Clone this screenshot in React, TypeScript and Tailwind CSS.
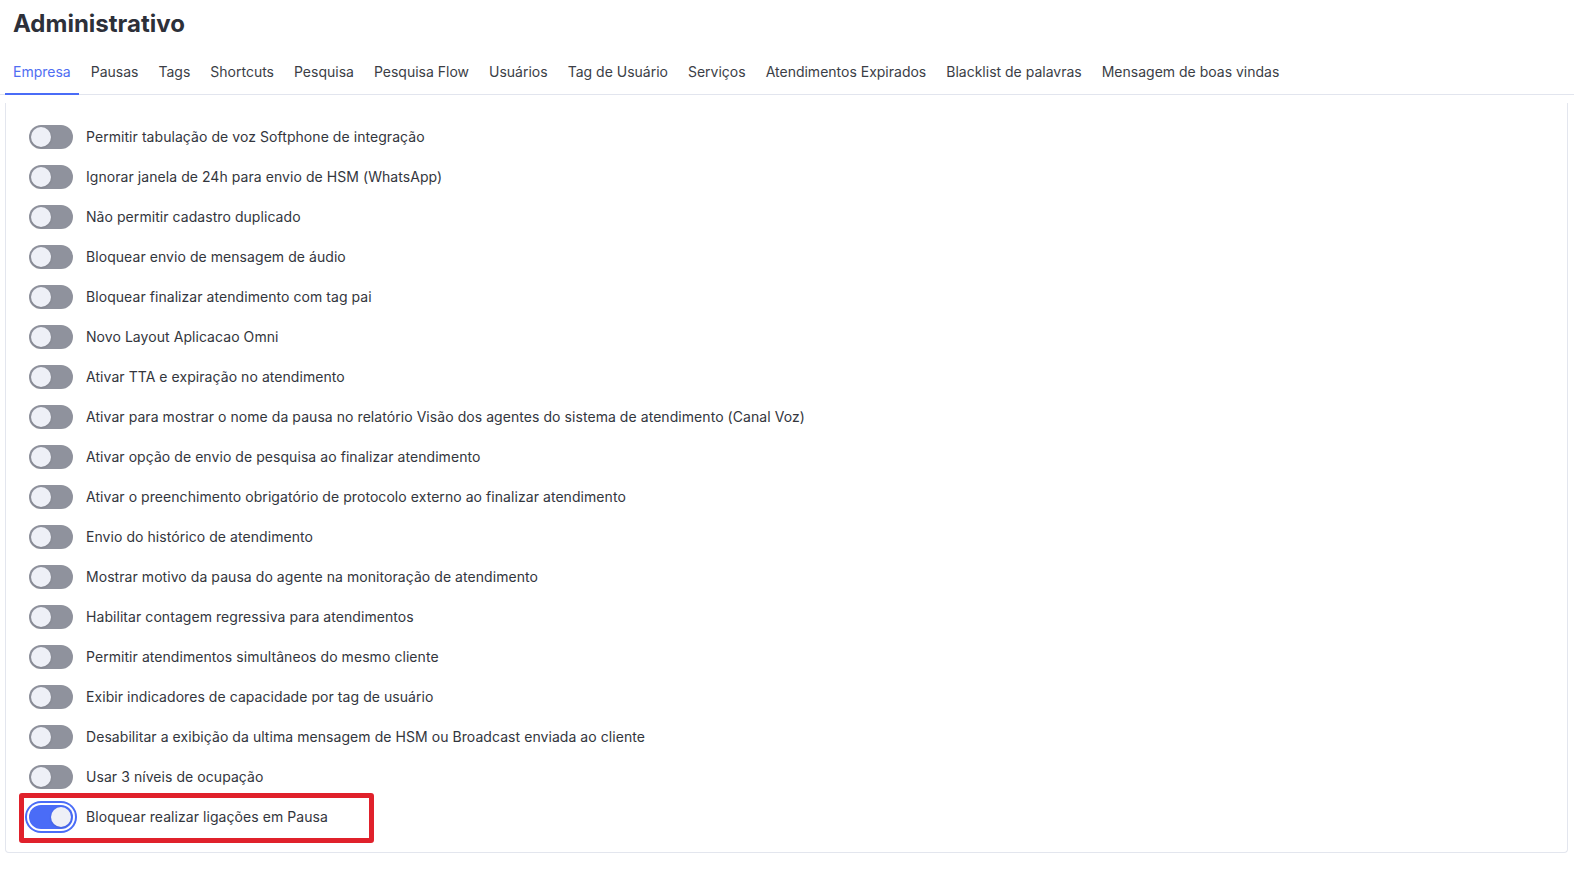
import React, { useState } from "react";

const tabs = [
  "Empresa",
  "Pausas",
  "Tags",
  "Shortcuts",
  "Pesquisa",
  "Pesquisa Flow",
  "Usuários",
  "Tag de Usuário",
  "Serviços",
  "Atendimentos Expirados",
  "Blacklist de palavras",
  "Mensagem de boas vindas",
];

const settings: { label: string; on: boolean }[] = [
  { label: "Permitir tabulação de voz Softphone de integração", on: false },
  { label: "Ignorar janela de 24h para envio de HSM (WhatsApp)", on: false },
  { label: "Não permitir cadastro duplicado", on: false },
  { label: "Bloquear envio de mensagem de áudio", on: false },
  { label: "Bloquear finalizar atendimento com tag pai", on: false },
  { label: "Novo Layout Aplicacao Omni", on: false },
  { label: "Ativar TTA e expiração no atendimento", on: false },
  {
    label:
      "Ativar para mostrar o nome da pausa no relatório Visão dos agentes do sistema de atendimento (Canal Voz)",
    on: false,
  },
  { label: "Ativar opção de envio de pesquisa ao finalizar atendimento", on: false },
  {
    label: "Ativar o preenchimento obrigatório de protocolo externo ao finalizar atendimento",
    on: false,
  },
  { label: "Envio do histórico de atendimento", on: false },
  { label: "Mostrar motivo da pausa do agente na monitoração de atendimento", on: false },
  { label: "Habilitar contagem regressiva para atendimentos", on: false },
  { label: "Permitir atendimentos simultâneos do mesmo cliente", on: false },
  { label: "Exibir indicadores de capacidade por tag de usuário", on: false },
  {
    label: "Desabilitar a exibição da ultima mensagem de HSM ou Broadcast enviada ao cliente",
    on: false,
  },
  { label: "Usar 3 níveis de ocupação", on: false },
  { label: "Bloquear realizar ligações em Pausa", on: true },
];

interface ToggleProps {
  checked: boolean;
  onChange: () => void;
}

const Toggle: React.FC<ToggleProps> = ({ checked, onChange }) => {
  return (
    <button
      type="button"
      role="switch"
      aria-checked={checked}
      onClick={onChange}
      className={
        checked
          ? "relative h-6 w-11 shrink-0 rounded-full bg-[#4a6cf7] ring-2 ring-[#4a6cf7] ring-offset-[2px] ring-offset-white"
          : "relative h-6 w-11 shrink-0 rounded-full bg-[#8f929d]"
      }
    >
      <span
        className={
          checked
            ? "absolute left-[22px] top-[2px] h-5 w-5 rounded-full bg-[#eef0f7] shadow-sm"
            : "absolute left-[2px] top-[2px] h-5 w-5 rounded-full bg-[#eef0f7] shadow-sm"
        }
      />
    </button>
  );
};

export default function App() {
  const [active, setActive] = useState(0);
  const [values, setValues] = useState(settings.map((s) => s.on));

  const toggle = (i: number) => {
    setValues((v) => v.map((x, j) => (j === i ? !x : x)));
  };

  return (
    <div
      className="min-h-screen bg-white pl-[5px] pr-[6px] pt-[8px]"
      style={{ fontFamily: "Inter, 'Noto Sans', sans-serif" }}
    >
      <h1 className="pl-2 text-2xl leading-8 font-bold text-[#2d3039]">Administrativo</h1>

      <div className="mt-[12px] -mr-[6px] -ml-[5px] border-b border-[#e2e5ee] pl-[5px]">
        <div className="flex gap-1">
          {tabs.map((t, i) => (
            <button
              key={t}
              onClick={() => setActive(i)}
              className={
                i === active
                  ? "-mb-px border-b-2 border-[#4a6cf7] px-2 pt-[10px] pb-[11px] text-sm leading-5 text-[#4f6ef2]"
                  : "-mb-px border-b-2 border-transparent px-2 pt-[10px] pb-[11px] text-sm leading-5 text-[#3b3e46]"
              }
            >
              {t}
            </button>
          ))}
        </div>
      </div>

      <div className="mt-2 rounded-b-[4px] border-x border-b border-[#e3e6ee] pt-[14px] pb-[15px] pl-[23px]">
        {settings.map((s, i) => (
          <div key={s.label} className="relative flex h-10 items-center gap-[13px]">
            <Toggle checked={values[i]} onChange={() => toggle(i)} />
            <span className="text-sm tracking-[0.06px] text-[#33363d]">{s.label}</span>
            {i === settings.length - 1 && (
              <span className="pointer-events-none absolute -left-[10px] -top-[4px] h-[50px] w-[355px] rounded-[3px] border-[5px] border-[#e0212b]" />
            )}
          </div>
        ))}
      </div>
    </div>
  );
}
